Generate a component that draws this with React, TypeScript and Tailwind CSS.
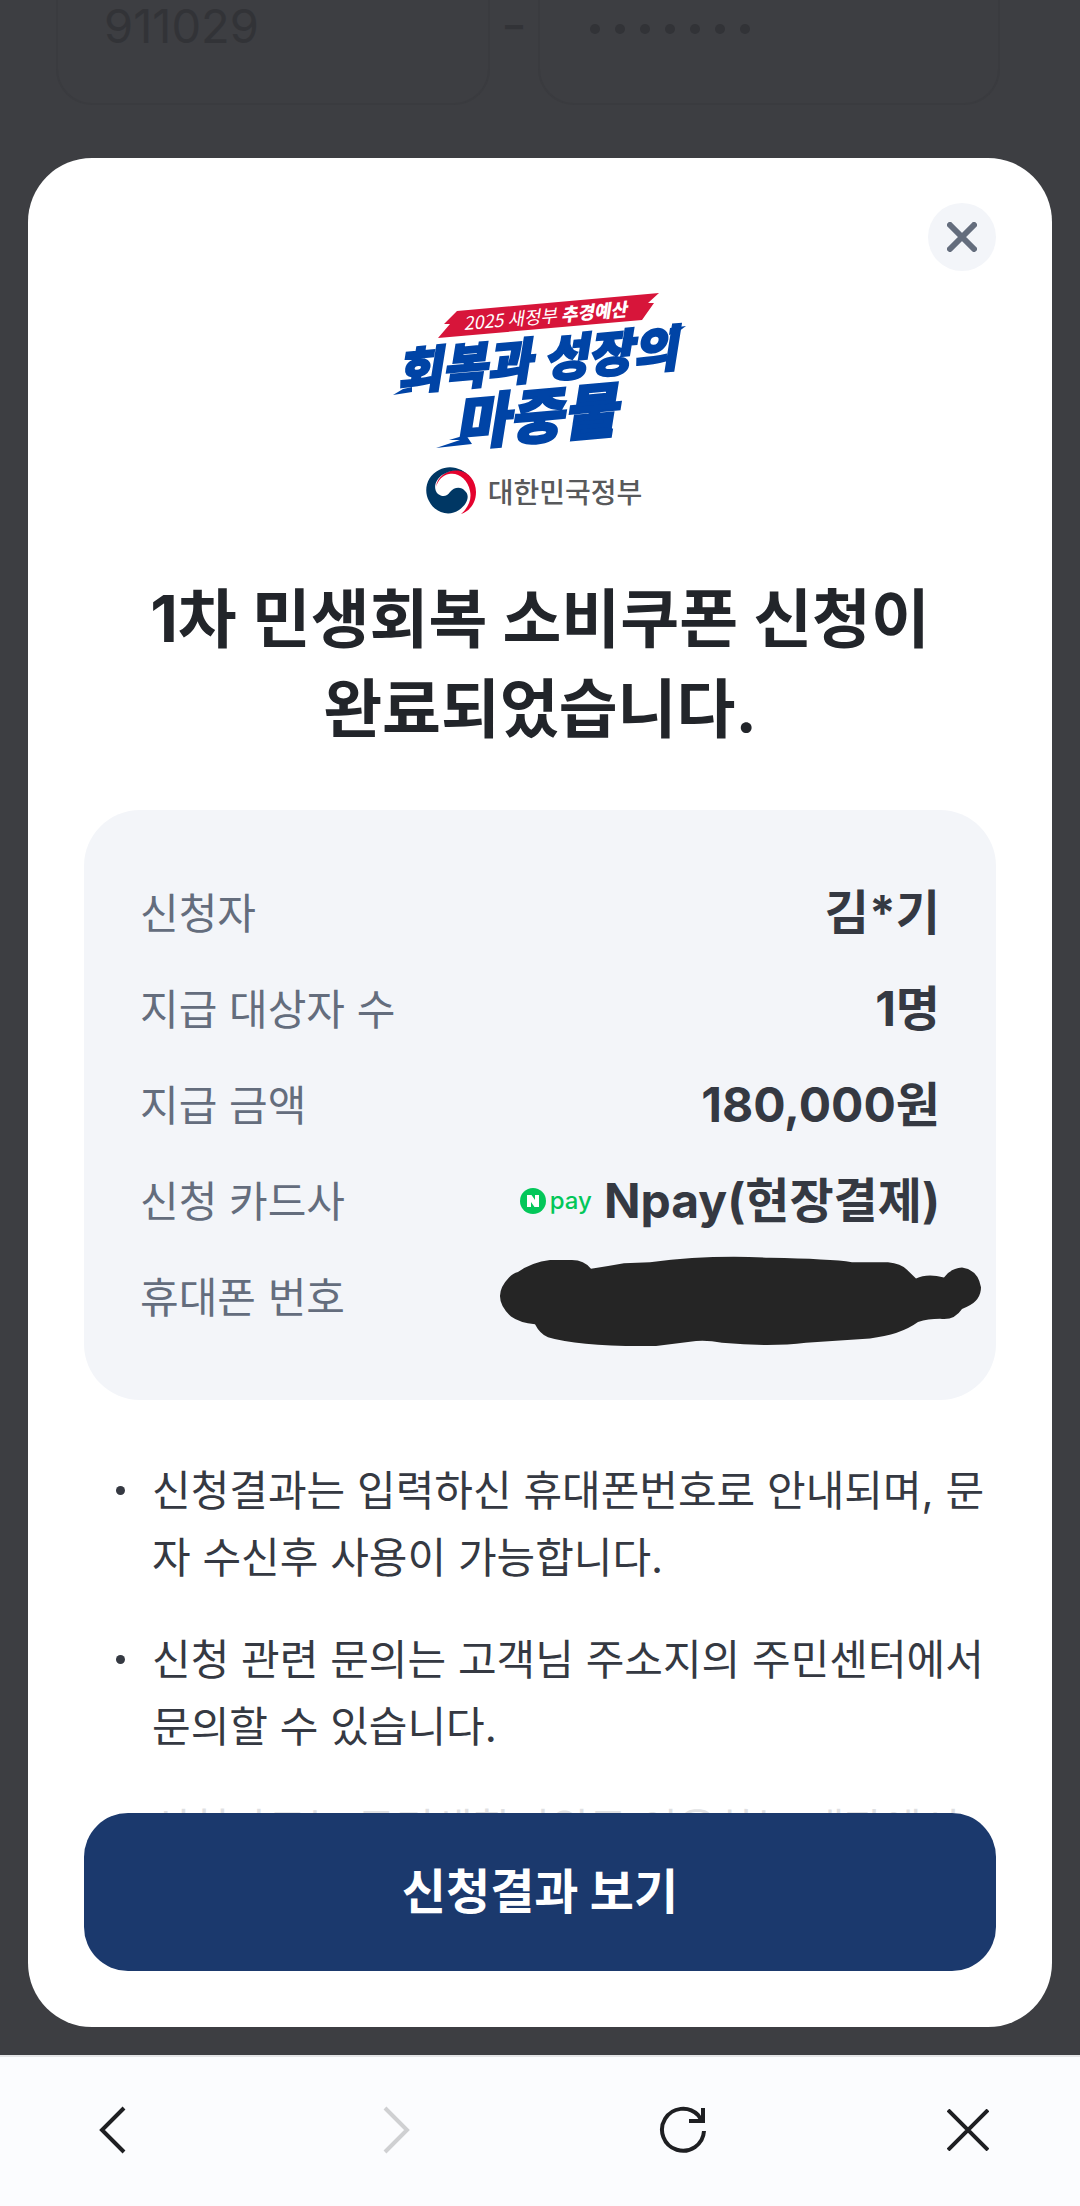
import { useState } from "react";

type Row = {
  label: string;
  value: string;
};

const rows: Row[] = [
  { label: "신청자", value: "김*기" },
  { label: "지급 대상자 수", value: "1명" },
  { label: "지급 금액", value: "180,000원" },
  { label: "신청 카드사", value: "Npay(현장결제)" },
  { label: "휴대폰 번호", value: "" },
];

const notes = [
  "신청결과는 입력하신 휴대폰번호로 안내되며, 문자 수신후 사용이 가능합니다.",
  "신청 관련 문의는 고객님 주소지의 주민센터에서 문의할 수 있습니다.",
  "신청카드는 국민생활지원금 이용하는 매장에서",
];

const CampaignLogo = () => (
  <svg viewBox="0 0 300 176" className="h-[176px] w-[300px] overflow-visible" role="img" aria-label="회복과 성장의 마중물">
    <path d="M67 21 269 3 258 13 264 13 252 30 48 48 60 34 54 34Z" fill="#d7153a" />
    <g fill="#fff" fontFamily="'Noto Sans CJK KR', sans-serif">
      <text transform="translate(74 40) rotate(-5)" fontSize="18" fontStyle="italic">
        2025 새정부 <tspan fontWeight="900">추경예산</tspan>
      </text>
    </g>
    <g
      fill="#0044a6"
      stroke="#0044a6"
      strokeWidth="2"
      fontFamily="'Noto Sans CJK KR', sans-serif"
      fontWeight="900"
      fontStyle="italic"
    >
      <text transform="translate(8 100) rotate(-5)" fontSize="49">
        회복과 성장의
      </text>
      <text transform="translate(66 155) rotate(-5)" fontSize="59">
        마중물
      </text>
    </g>
    {/* speed streaks around the lettering */}
    <g fill="#0044a6">
      <path d="M3 105 13 99 22 97 22 102Z" />
      <path d="M280 38 296 36 288 42 279 45Z" />
      <path d="M46 158 70 150 59 150 76 145 82 154Z" />
    </g>
  </svg>
);

const Emblem = () => (
  <svg viewBox="0 0 50 50" className="size-[50px]" aria-hidden="true">
    <path d="M10 21C11 10 22 3 33 4C43 6 50 15 50 26C50 37 44 45 35 48C42 42 46 34 44 25C42 13 32 6 23 8C17 9 12 14 10 21Z" fill="#e4032e" />
    <path d="M45 12C37 2 24-2 13 4C1 10-3 24 3 35C9 47 23 51 33 44C42 38 44 29 39 25C35 20 28 21 24 26C21 31 16 31 12 28C6 22 10 12 18 8C28 2 39 4 45 12Z" fill="#003764" />
  </svg>
);

const NpayLogo = () => (
  <span className="flex items-center gap-1 text-[#03c75a]">
    <svg viewBox="0 0 26 26" className="size-[26px]" aria-hidden="true">
      <circle cx="13" cy="13" r="13" fill="currentColor" />
      <path d="M7 7h4.500l3.500 5V7H19v12h-4.500L11 14v5H7Z" fill="#fff" />
    </svg>
    <span className="font-[Inter] text-[24px] leading-none font-medium">pay</span>
  </span>
);

const PhoneScribble = () => (
  <svg
    viewBox="0 -7 482 90"
    preserveAspectRatio="none"
    className="-mr-[42px] h-[98px] w-[482px] overflow-visible"
    role="img"
    aria-label="가려진 휴대폰 번호"
  >
    <path
      d="M18 15Q32 6 50 4H72Q84 4 91 12Q106 10 124 7L150 6Q210-1 270 2Q330 3 352 6H388Q401 7 407 13L416 21Q427 16 444 20Q450 12 462 11Q478 13 481 29Q481 41 467 47L462 49Q454 60 440 58Q428 58 418 61Q400 73 370 76L306 80Q270 84 222 80Q205 77 190 79L156 83Q80 84 48 75Q40 72 35 63Q20 62 11 56Q-10 38 9 20Q13 16 18 15Z"
      fill="#252525"
    />
  </svg>
);

const navButton = "flex size-16 items-center justify-center";

export default function App() {
  const [open, setOpen] = useState(true);

  return (
    <div className="relative flex min-h-screen flex-col bg-[#3d3e42] font-[Inter,'Noto_Sans_CJK_KR',sans-serif] text-[#353942]">
      <div className="absolute inset-x-0 top-0 grid grid-cols-[434fr_28px_462fr] gap-[10px] pr-20 pl-14 text-[#323337]">
        <input
          aria-label="주민등록번호 앞자리"
          defaultValue="911029"
          className="h-[105px] w-full min-w-0 rounded-b-[36px] border-2 border-t-0 border-[#3a3b3f] px-[46px] pb-[52px] text-[47px]"
        />
        <span className="text-center text-[36px] leading-[50px] font-bold">–</span>
        <div className="h-[105px] min-w-0 rounded-b-[36px] border-2 border-t-0 border-[#3a3b3f] pt-6 pl-[50px]">
          <div className="flex gap-[15px]">
            {Array.from({ length: 7 }).map((_, i) => (
              <span key={i} className="size-[10px] rounded-full bg-[#323337]" />
            ))}
          </div>
        </div>
      </div>

      <main className="relative flex flex-1 flex-col px-7 pt-[158px] pb-7">
        {open && (
          <section role="dialog" aria-labelledby="title" className="flex flex-1 flex-col rounded-[64px] bg-white px-14 pt-[45px] pb-14">
            <button
              aria-label="닫기"
              onClick={() => setOpen(false)}
              className="flex size-[68px] items-center justify-center self-end rounded-full bg-[#f3f5f9]"
            >
              <svg viewBox="0 0 30 30" className="size-[30px]" fill="none" stroke="#646d7d" strokeWidth="6" strokeLinecap="round">
                <path d="M3 3 27 27M27 3 3 27" />
              </svg>
            </button>

            <div className="mt-[19px] flex flex-col items-center">
              <CampaignLogo />
              <div className="mr-3 flex items-center gap-3">
                <Emblem />
                <span className="font-['Noto_Sans_CJK_KR',sans-serif] text-[28px] leading-[50px] font-medium text-[#58595b]">
                  대한민국정부
                </span>
              </div>
            </div>

            <h1 id="title" className="mt-[58px] text-center text-[64px] leading-[90px] font-bold text-[#22252a]">
              1차 민생회복 소비쿠폰 신청이
              <br />
              완료되었습니다.
            </h1>

            <dl className="mt-14 flex flex-col gap-[26px] rounded-[56px] bg-[#f3f5f9] px-14 py-[68px]">
              {rows.map((row) => (
                <div key={row.label} className="flex h-[70px] items-center justify-between">
                  <dt className="text-[42px] text-[#646d7d]">{row.label}</dt>
                  <dd className="flex items-center gap-3 text-[48px] font-bold">
                    {row.value.startsWith("Npay") && <NpayLogo />}
                    {row.value || <PhoneScribble />}
                  </dd>
                </div>
              ))}
            </dl>

            <div className="relative mt-[57px] h-[356px] overflow-hidden">
              <ul className="flex flex-col gap-[35px] pl-8 text-[42px] leading-[67px]">
                {notes.map((note) => (
                  <li key={note} className="flex">
                    <span className="mt-[29px] mr-[27px] size-[9px] shrink-0 rounded-full bg-[#353942]" />
                    <p className="min-w-0 flex-1 break-all">{note}</p>
                  </li>
                ))}
              </ul>
              <div className="absolute inset-x-0 bottom-0 h-7 bg-white/85" />
            </div>

            <button className="h-[158px] rounded-[44px] bg-[#1b396d] text-[48px] font-bold text-white">신청결과 보기</button>
          </section>
        )}
      </main>

      <nav className="relative flex h-[151px] items-center justify-between border-t-2 border-[#e4e5e7] bg-[#fbfcfe] px-20 pb-1 text-[#1e1f22]">
        <button aria-label="뒤로" className={navButton}>
          <svg viewBox="0 0 28 48" className="h-12 w-7" fill="none" stroke="currentColor" strokeWidth="4">
            <path d="M26 2 4 24 26 46" />
          </svg>
        </button>
        <button aria-label="앞으로" disabled className={`${navButton} text-[#cfd0d2]`}>
          <svg viewBox="0 0 28 48" className="h-12 w-7" fill="none" stroke="currentColor" strokeWidth="4">
            <path d="M2 2 24 24 2 46" />
          </svg>
        </button>
        <button aria-label="새로고침" className={navButton}>
          <svg viewBox="0 0 48 48" className="size-12" fill="none" stroke="currentColor" strokeWidth="4">
            <path d="M45 25A21 21 0 1 1 39 9L43 15" />
            <path d="M44 2V15H30" />
          </svg>
        </button>
        <button aria-label="창 닫기" className={navButton}>
          <svg viewBox="0 0 42 42" className="size-[42px]" fill="none" stroke="currentColor" strokeWidth="4">
            <path d="M1 1 41 41M41 1 1 41" />
          </svg>
        </button>
      </nav>
    </div>
  );
}
